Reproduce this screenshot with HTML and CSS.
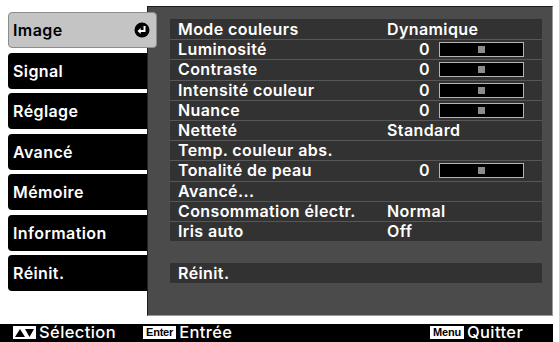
FILE: index.html
```html
<!DOCTYPE html>
<html lang="fr">
<head>
    <meta charset="UTF-8">
    <meta name="viewport" content="width=device-width, initial-scale=1.0">
    <title>Menu Image</title>
    <link rel="stylesheet" href="styles.css">
</head>
<body>
    <div class="osd">
        <div class="main">
            <!-- Onglets du menu -->
            <ul class="tabs">
                <li class="tab active">
                    Image
                    <span class="enter-mark">
                        <svg viewBox="0 0 16 16" width="16" height="16">
                            <circle cx="8" cy="8" r="7.5" fill="#000"/>
                            <path d="M10.5 4v5H6" fill="none" stroke="#fff" stroke-width="2"/>
                            <path d="M3.5 9l3.2-3v6z" fill="#fff"/>
                        </svg>
                    </span>
                </li>
                <li class="tab">Signal</li>
                <li class="tab">Réglage</li>
                <li class="tab">Avancé</li>
                <li class="tab">Mémoire</li>
                <li class="tab">Information</li>
                <li class="tab">Réinit.</li>
            </ul>

            <!-- Réglages -->
            <section class="panel">
                <ul class="rows">
                    <li class="row"><span class="label">Mode couleurs</span><span class="value">Dynamique</span></li>
                    <li class="row"><span class="label">Luminosité</span><span class="value"><span class="num">0</span><span class="slider"><i></i></span></span></li>
                    <li class="row"><span class="label">Contraste</span><span class="value"><span class="num">0</span><span class="slider"><i></i></span></span></li>
                    <li class="row"><span class="label">Intensité couleur</span><span class="value"><span class="num">0</span><span class="slider"><i></i></span></span></li>
                    <li class="row"><span class="label">Nuance</span><span class="value"><span class="num">0</span><span class="slider"><i></i></span></span></li>
                    <li class="row"><span class="label">Netteté</span><span class="value">Standard</span></li>
                    <li class="row"><span class="label">Temp. couleur abs.</span><span class="value"></span></li>
                    <li class="row"><span class="label">Tonalité de peau</span><span class="value"><span class="num">0</span><span class="slider"><i></i></span></span></li>
                    <li class="row"><span class="label">Avancé...</span><span class="value"></span></li>
                    <li class="row"><span class="label">Consommation électr.</span><span class="value">Normal</span></li>
                    <li class="row"><span class="label">Iris auto</span><span class="value">Off</span></li>
                </ul>
                <div class="row reset"><span class="label">Réinit.</span></div>
            </section>
        </div>

        <!-- Guide des touches -->
        <footer class="guide">
            <div class="hint hint-select">
                <span class="key key-arrows">
                    <svg viewBox="0 0 23 13" width="23" height="13">
                        <path d="M2 11L7 3l5 8z" fill="#000"/>
                        <path d="M12 3h9l-4.5 8z" fill="#000"/>
                    </svg>
                </span>
                Sélection
            </div>
            <div class="hint hint-enter"><span class="key">Enter</span>Entrée</div>
            <div class="hint"><span class="key">Menu</span>Quitter</div>
        </footer>
    </div>
</body>
</html>
```

FILE: styles.css
```css
* {
    box-sizing: border-box;
    margin: 0;
    padding: 0;
}

body {
    background: #fff;
    font-family: Inter, 'Liberation Sans', sans-serif;
    font-weight: 600;
    color: #fff;
}

.osd {
    width: 559px;
    height: 342px;
    display: flex;
    flex-direction: column;
}

.main {
    display: flex;
    height: 324px;
}

/* Onglets */
.tabs {
    list-style: none;
    width: 147px;
    padding: 12px 0 0 8px;
    display: flex;
    flex-direction: column;
    gap: 4.5px;
}

.tab {
    height: 36px;
    background: #000;
    border-radius: 4px 0 0 4px;
    padding-left: 5px;
    display: flex;
    align-items: center;
    font-size: 16px;
    letter-spacing: 0.4px;
}

.tab.active {
    position: relative;
    z-index: 2;
    margin-right: -10px;
    background: #c4c4c4;
    color: #000;
    border: 1px solid #8c8c8c;
    border-radius: 4px;
    padding-left: 4px;
    justify-content: space-between;
    padding-right: 6px;
}

.enter-mark svg {
    display: block;
}

/* Panneau */
.panel {
    margin-top: 6px;
    width: 406px;
    height: 310px;
    background: #4b4b4b;
    border: 1px solid #1e1e1e;
    border-right-color: #9a9a9a;
    border-bottom-color: #9a9a9a;
    padding: 12px 10px 0 22px;
}

.rows {
    list-style: none;
}

.row {
    height: 20.2px;
    background: #323232;
    border-top: 1px solid #575757;
    display: flex;
    align-items: center;
    font-size: 16px;
    letter-spacing: 0.4px;
    line-height: 19px;
}

.row:first-child {
    border-top: none;
}

.label {
    width: 217px;
    padding-left: 8px;
    white-space: nowrap;
}

.value {
    display: flex;
    align-items: center;
    gap: 9px;
}

.num {
    width: 43px;
    text-align: right;
}

.slider {
    width: 85px;
    height: 15px;
    background: #000;
    border: 1px solid #b4b4b4;
    display: flex;
    align-items: center;
    justify-content: center;
}

.slider i {
    width: 7px;
    height: 7px;
    background: #8c8c8c;
}

.reset {
    margin-top: 22px;
    border-top: none;
}

/* Guide */
.guide {
    height: 18px;
    width: 553px;
    background: #000;
    display: flex;
    align-items: flex-end;
    padding-left: 13px;
    font-size: 16.5px;
    font-weight: 500;
    letter-spacing: 0.4px;
}

.hint {
    display: flex;
    align-items: center;
    gap: 3px;
    line-height: normal;
}

.hint-select {
    width: 130px;
}

.hint-enter {
    width: 287px;
}

.key {
    height: 13px;
    background: #fff;
    color: #000;
    font-family: 'Liberation Sans', sans-serif;
    font-size: 11px;
    font-weight: 700;
    letter-spacing: -0.2px;
    line-height: 13px;
    padding: 0 3px;
}

.key-arrows {
    padding: 0;
}

.key-arrows svg {
    display: block;
}
```
